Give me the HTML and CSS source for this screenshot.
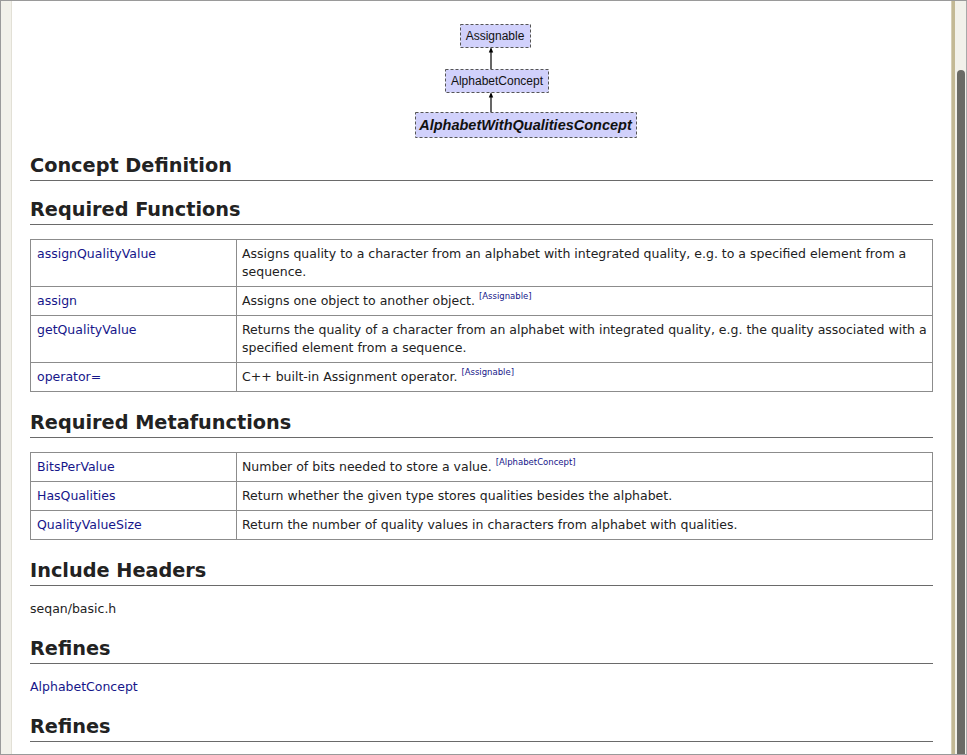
FILE: index.html
```html
<!DOCTYPE html>
<html>
<head>
<meta charset="utf-8">
<link rel="stylesheet" href="styles.css">
</head>
<body>
<div class="window">
  <div class="leftbar"></div>
  <div class="content">
    <div class="diagram">
      <svg class="graph" width="903" height="140" viewBox="0 0 903 140">
        <g class="edge">
          <line x1="461" y1="68" x2="461" y2="50"/>
          <polygon points="461,46 458.8,51.5 463.2,51.5"/>
          <line x1="461" y1="111" x2="461" y2="95"/>
          <polygon points="461,91 458.8,96.5 463.2,96.5"/>
        </g>
        <rect class="node" x="430.5" y="23.5" width="70" height="23"/>
        <text class="label" x="465" y="39" text-anchor="middle">Assignable</text>
        <rect class="node" x="415.5" y="68.5" width="103" height="23"/>
        <text class="label" x="467" y="84" text-anchor="middle">AlphabetConcept</text>
        <rect class="node" x="385.5" y="111.5" width="221" height="25"/>
        <text class="label main" x="495.5" y="129" text-anchor="middle">AlphabetWithQualitiesConcept</text>
      </svg>
    </div>

    <h2 class="section">Concept Definition</h2>

    <h2 class="section">Required Functions</h2>
    <table class="members">
      <tr>
        <td class="name"><a href="#">assignQualityValue</a></td>
        <td class="desc">Assigns quality to a character from an alphabet with integrated quality, e.g. to a specified element from a sequence.</td>
      </tr>
      <tr>
        <td class="name"><a href="#">assign</a></td>
        <td class="desc">Assigns one object to another object. <sup class="from"><a href="#">[Assignable]</a></sup></td>
      </tr>
      <tr>
        <td class="name"><a href="#">getQualityValue</a></td>
        <td class="desc">Returns the quality of a character from an alphabet with integrated quality, e.g. the quality associated with a specified element from a sequence.</td>
      </tr>
      <tr>
        <td class="name"><a href="#">operator=</a></td>
        <td class="desc">C++ built-in Assignment operator. <sup class="from"><a href="#">[Assignable]</a></sup></td>
      </tr>
    </table>

    <h2 class="section">Required Metafunctions</h2>
    <table class="members">
      <tr>
        <td class="name"><a href="#">BitsPerValue</a></td>
        <td class="desc">Number of bits needed to store a value. <sup class="from"><a href="#">[AlphabetConcept]</a></sup></td>
      </tr>
      <tr>
        <td class="name"><a href="#">HasQualities</a></td>
        <td class="desc">Return whether the given type stores qualities besides the alphabet.</td>
      </tr>
      <tr>
        <td class="name"><a href="#">QualityValueSize</a></td>
        <td class="desc">Return the number of quality values in characters from alphabet with qualities.</td>
      </tr>
    </table>

    <h2 class="section">Include Headers</h2>
    <p class="text">seqan/basic.h</p>

    <h2 class="section">Refines</h2>
    <p class="text"><a href="#">AlphabetConcept</a></p>

    <h2 class="section">Refines</h2>
  </div>
  <div class="scrollbar"><div class="thumb"></div></div>
</div>
</body>
</html>
```
FILE: styles.css
```css
* { box-sizing: border-box; }
html, body {
  margin: 0;
  padding: 0;
  background: #ffffff;
}
body {
  font-family: "DejaVu Sans", "Noto Sans", sans-serif;
  color: #222222;
  font-size: 12.5px;
}
.window {
  display: flex;
  height: 755px;
  overflow: hidden;
  border-top: 1px solid #9a9a9a;
  border-bottom: 1px solid #9a9a9a;
}
.leftbar {
  width: 12px;
  flex: none;
  background: #f2f1ea;
  border-left: 1px solid #9a9a9a;
  border-right: 1px solid #e2e0d6;
}
.content {
  flex: 1;
  padding: 0 18px;
  min-width: 0;
}
.scrollbar {
  width: 16px;
  flex: none;
  background: #f2f1ea;
  border-left: 1px solid #d6cfb6;
  box-shadow: inset 3px 0 0 #c3b995;
  border-right: 1px solid #a8a8a8;
  padding: 69px 1px 0 5px;
}
.thumb {
  width: 8px;
  height: 100%;
  background: #6b6b66;
  border-radius: 4px 4px 0 0;
}
.diagram {
  height: 134px;
}
.graph {
  display: block;
  overflow: visible;
}
.node {
  fill: #d1d1fb;
  stroke: #555555;
  stroke-width: 1;
  stroke-dasharray: 3 2;
}
.edge line {
  stroke: #000000;
  stroke-width: 1.2;
}
.edge polygon {
  fill: #000000;
}
.label {
  font-family: "Liberation Sans", Arial, sans-serif;
  font-size: 12px;
  fill: #111111;
}
.label.main {
  font-size: 14.5px;
  font-weight: bold;
  font-style: italic;
}
h2.section {
  font-size: 19.3px;
  font-weight: bold;
  line-height: 22px;
  margin: 20px 0 14px;
  padding-bottom: 3px;
  border-bottom: 1px solid #6a6a6a;
  color: #222222;
}
h2.section + h2.section {
  margin-top: 18px;
}
a {
  color: #16168a;
  text-decoration: none;
}
table.members {
  width: 100%;
  border-collapse: collapse;
  margin: 0;
}
table.members td {
  border: 1px solid #8c8c8c;
  padding: 5px 6px 5px 6px;
  line-height: 18px;
  vertical-align: top;
  font-size: 12.5px;
}
table.members td.name {
  width: 206px;
}
table.members td.desc {
  padding-left: 5px;
  padding-right: 3px;
}
sup.from {
  font-size: 8.5px;
  line-height: 0;
  vertical-align: 6px;
}
p.text {
  margin: 0;
  line-height: 18px;
}
```
